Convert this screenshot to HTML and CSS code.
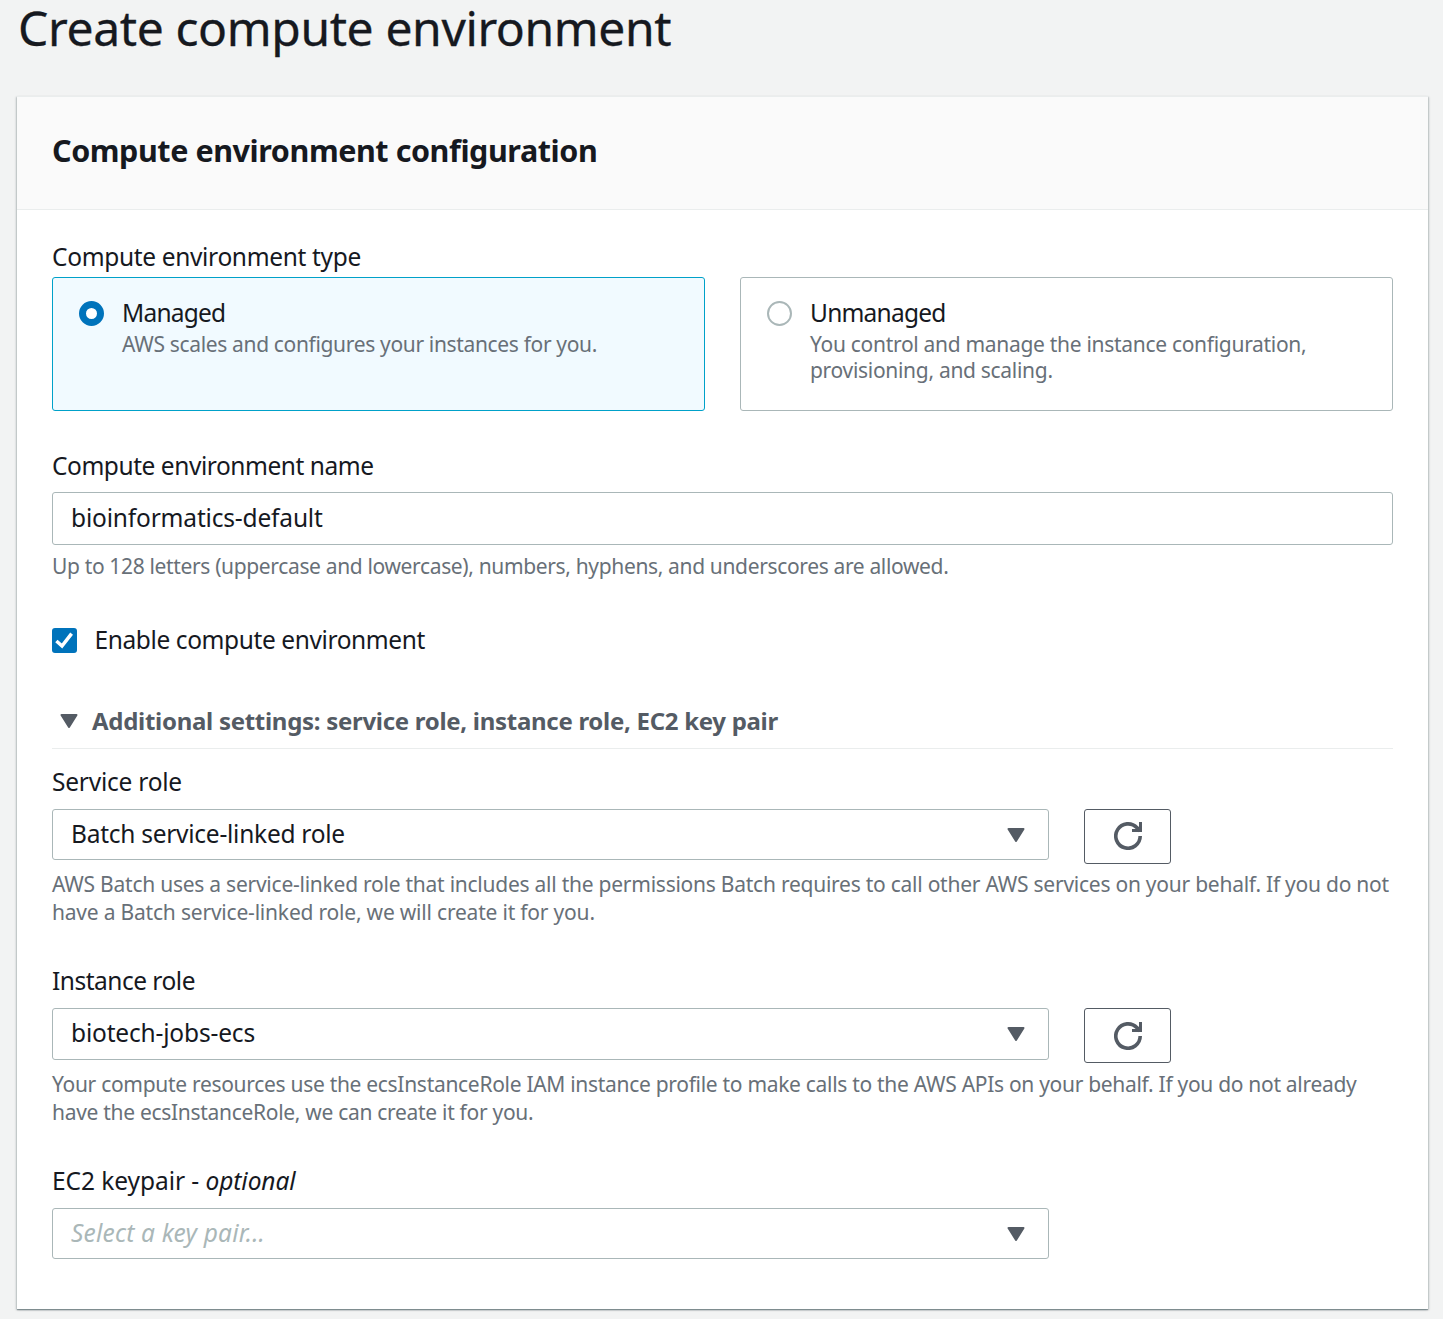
FILE: index.html
```html
<!DOCTYPE html>
<html lang="en">
<head>
<meta charset="utf-8">
<title>Create compute environment</title>
<link rel="stylesheet" href="styles.css">
</head>
<body>
<svg class="sprite" aria-hidden="true">
  <symbol id="caret" viewBox="0 0 18 14"><path d="M1.5 1h15L9 13z" fill="currentColor" stroke="currentColor" stroke-width="2" stroke-linejoin="round"/></symbol>
  <symbol id="refresh" viewBox="0 0 28 28"><path d="M26.2 14A12.2 12.2 0 1 1 23 5.8L26 9" fill="none" stroke="currentColor" stroke-width="3.6"/><path d="M26.5 0v8.6H18" fill="none" stroke="currentColor" stroke-width="3"/><path d="M21 8.6L26.5 3v5.6z" fill="currentColor"/></symbol>
</svg>
<main class="page">
  <h1 class="page-title">Create compute environment</h1>
  <section class="card">
    <header class="card-header"><h2 class="card-title">Compute environment configuration</h2></header>
    <div class="card-body">
      <div class="label type-label">Compute environment type</div>
      <div class="tiles">
        <label class="tile selected">
          <span class="radio"></span>
          <span class="tile-text">
            <span class="tile-title">Managed</span>
            <span class="tile-desc">AWS scales and configures your instances for you.</span>
          </span>
        </label>
        <label class="tile">
          <span class="radio"></span>
          <span class="tile-text">
            <span class="tile-title">Unmanaged</span>
            <span class="tile-desc desc-wide">You control and manage the instance configuration,<br>provisioning, and scaling.</span>
          </span>
        </label>
      </div>

      <div class="label name-label">Compute environment name</div>
      <div class="input name-value">bioinformatics-default</div>
      <p class="help name-help">Up to 128 letters (uppercase and lowercase), numbers, hyphens, and underscores are allowed.</p>

      <label class="check-row">
        <span class="checkbox"><svg width="25" height="25" viewBox="0 0 25 25"><path d="M4.4 13l5.6 5L19.6 5.6" fill="none" stroke="#fff" stroke-width="3.5"/></svg></span>
        <span class="check-text">Enable compute environment</span>
      </label>

      <div class="expander">
        <svg class="caret"><use href="#caret"/></svg>
        <span>Additional settings: service role, instance role, EC2 key pair</span>
      </div>

      <div class="label service-label">Service role</div>
      <div class="select-row">
        <div class="select service-value"><span>Batch service-linked role</span><svg class="caret"><use href="#caret"/></svg></div>
        <button class="refresh" type="button" aria-label="Refresh"><svg width="28" height="28"><use href="#refresh"/></svg></button>
      </div>
      <p class="help service-help">AWS Batch uses a service-linked role that includes all the permissions Batch requires to call other AWS services on your behalf. If you do not<br><span class="help-tail">have a Batch service-linked role, we will create it for you.</span></p>

      <div class="label instance-label">Instance role</div>
      <div class="select-row">
        <div class="select tall instance-value"><span>biotech-jobs-ecs</span><svg class="caret"><use href="#caret"/></svg></div>
        <button class="refresh low" type="button" aria-label="Refresh"><svg width="28" height="28"><use href="#refresh"/></svg></button>
      </div>
      <p class="help instance-help">Your compute resources use the ecsInstanceRole IAM instance profile to make calls to the AWS APIs on your behalf. If you do not already<br>have the ecsInstanceRole, we can create it for you.</p>

      <div class="label key-label">EC2 keypair - <i>optional</i></div>
      <div class="select-row">
        <div class="select key-value"><i class="placeholder">Select a key pair...</i><svg class="caret"><use href="#caret"/></svg></div>
      </div>
    </div>
  </section>
</main>
</body>
</html>
```
FILE: styles.css
```css
* { box-sizing: border-box; }

body {
  margin: 0;
  background: #f2f3f3;
  color: #16191f;
  font: 24.5px/28px "Noto Sans", "Open Sans", sans-serif;
  white-space: nowrap;
}

.sprite { display: none; }

.page { height: 1319px; padding: 0 15px 0 17px; }

.page-title {
  margin: 0;
  height: 96px;
  padding-left: 1px;
  font-size: 48px;
  font-weight: 400;
  line-height: 55px;
  letter-spacing: -0.38px;
  -webkit-text-stroke: 0.3px;
}

.card {
  background: #fff;
  border-top: 1px solid #eaeded;
  box-shadow: 0 1px 1px 0 rgba(0, 28, 36, 0.3), 1px 1px 2px 0 rgba(0, 28, 36, 0.2), -1px 1px 2px 0 rgba(0, 28, 36, 0.2);
}

.card-header {
  padding: 33px 35px 38px;
  background: #fafafa;
  border-bottom: 1px solid #eaeded;
}

.card-title {
  margin: 0;
  font-size: 30.5px;
  font-weight: 700;
  line-height: 41px;
  letter-spacing: -0.43px;
}

.card-body { padding: 33px 35px 50px; }

/* Labels */
.type-label { margin-bottom: 6px; letter-spacing: -0.34px; }
.name-label { margin: 41px 0 12px; letter-spacing: -0.45px; }
.service-label { margin: 19px 0 13px; letter-spacing: -0.23px; }
.instance-label { margin: 41px 0 13px; letter-spacing: -0.5px; }
.key-label { margin: 41px 0 13px; letter-spacing: -0.06px; }

/* Radio tiles */
.tiles { display: grid; grid-template-columns: 1fr 1fr; gap: 35px; }

.tile {
  display: flex;
  height: 134px;
  padding: 21px 26px;
  border: 1px solid #aab7b8;
  border-radius: 3px;
}

.tile.selected { background: #f1faff; border-color: #00a1c9; }

.radio {
  flex: none;
  width: 25px;
  height: 25px;
  margin: 2px 18px 0 0;
  background: #fff;
  border: 2px solid #aab7b8;
  border-radius: 50%;
}

.selected .radio { border: 7.5px solid #0073bb; }

.tile-text { display: flex; flex-direction: column; gap: 4px; }
.tile-title { letter-spacing: -0.78px; }
.tile-desc { color: #687078; font-size: 21px; line-height: 26px; letter-spacing: -0.34px; }
.desc-wide { letter-spacing: -0.3px; }

/* Inputs */
.input, .select {
  border: 1px solid #aab7b8;
  border-radius: 3px;
  padding: 0 18px;
}

.input { height: 53px; line-height: 50px; }
.name-value { letter-spacing: -0.18px; }

.select-row { display: flex; align-items: flex-start; gap: 35px; }

.select {
  display: flex;
  align-items: center;
  justify-content: space-between;
  width: 997px;
  height: 51px;
  padding-right: 23px;
}

.select > span, .select > i { margin-bottom: 2px; }
.select.tall { height: 52px; }
.service-value { letter-spacing: -0.26px; }
.instance-value { letter-spacing: -0.18px; }
.key-value { letter-spacing: 0.19px; }
.placeholder { color: #aab7b8; }

.caret { flex: none; width: 18px; height: 14px; color: #545b64; }

.refresh {
  display: flex;
  align-items: center;
  justify-content: center;
  width: 87px;
  height: 55px;
  padding: 0 0 1px;
  background: #fff;
  border: 1px solid #545b64;
  border-radius: 3px;
  color: #545b64;
}

.refresh.low { padding: 1px 0 0; }

.help { margin: 0; color: #687078; font-size: 21px; line-height: 28px; }
.name-help { margin-top: 7px; letter-spacing: -0.35px; }
.service-help { margin-top: 6px; letter-spacing: -0.245px; }
.help-tail { letter-spacing: -0.2px; }
.instance-help { margin-top: 7px; letter-spacing: -0.3px; }

/* Checkbox */
.check-row { display: flex; gap: 17.5px; margin-top: 46px; letter-spacing: -0.4px; }

.checkbox {
  width: 25px;
  height: 25px;
  margin-top: 2px;
  background: #0073bb;
  border-radius: 3px;
}

.checkbox svg { display: block; }

/* Expandable section heading */
.expander {
  display: flex;
  align-items: center;
  gap: 14px;
  margin-top: 53px;
  padding: 0 0 13px 8px;
  border-bottom: 1px solid #eaeded;
  color: #545b64;
  font-size: 24px;
  font-weight: 700;
  letter-spacing: -0.29px;
}
```
